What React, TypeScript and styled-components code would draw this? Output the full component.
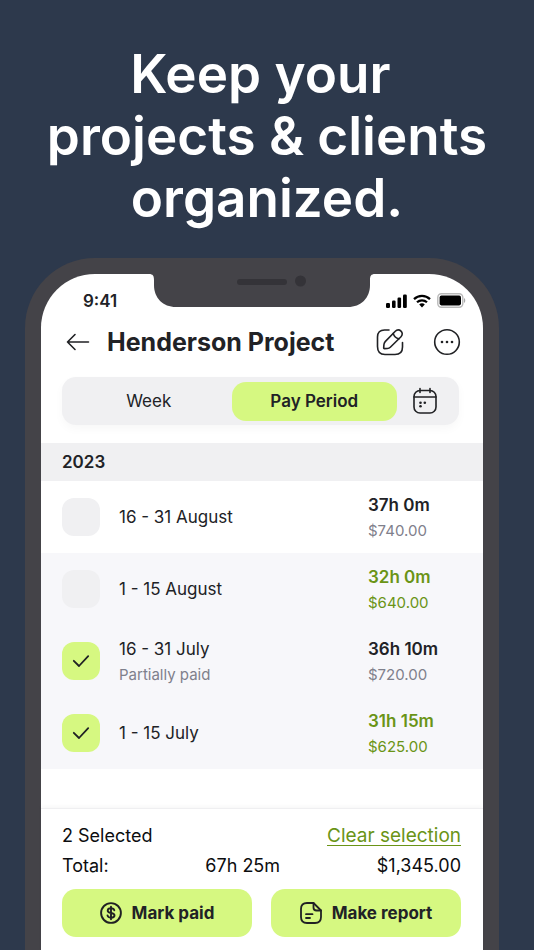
import React, { useState } from "react";
import styled, { createGlobalStyle } from "styled-components";

const color = {
  navy: "#2d394c",
  bezel: "#444348",
  ink: "#212226",
  grey: "#7f808c",
  lime: "#d6f881",
  green: "#6a9416",
  fill: "#f0f0f2",
  shade: "#f7f7fa",
};

const GlobalStyle = createGlobalStyle`
  *, *::before, *::after { box-sizing: border-box; }
  body {
    margin: 0;
    background: ${color.navy};
    color: ${color.ink};
    font-family: Inter, "Liberation Sans", sans-serif;
  }
  button, input { font: inherit; color: inherit; }
  button { border: 0; padding: 0; background: none; cursor: pointer; }
  svg { display: block; }
`;

const Page = styled.main`
  min-height: 100vh;
  display: flex;
  flex-direction: column;
  background: ${color.navy};
`;

const Headline = styled.h1`
  margin: 0;
  padding: 43px 20px 29px;
  color: #fff;
  font-size: 53px;
  font-weight: 600;
  line-height: 62px;
  text-align: center;
`;

const Phone = styled.section`
  flex: 1;
  display: flex;
  margin: 0 35px 0 25px;
  padding: 16px 16px 0;
  border-radius: 70px 70px 0 0;
  background: ${color.bezel};
`;

const Screen = styled.div`
  position: relative;
  flex: 1;
  min-width: 0;
  display: flex;
  flex-direction: column;
  border-radius: 54px 54px 0 0;
  background: #fff;
`;

const Notch = styled.svg`
  position: absolute;
  top: -1px;
  left: 50%;
  margin-left: -113px;
`;

const StatusBar = styled.div`
  display: flex;
  align-items: center;
  justify-content: space-between;
  height: 44px;
  padding: 9px 17px 0 42px;
`;

const Clock = styled.span`
  font-size: 17px;
  font-weight: 600;
`;

const StatusIcons = styled.div`
  display: flex;
  align-items: center;
  gap: 6px;
`;

const TitleBar = styled.header`
  display: flex;
  align-items: center;
  height: 48px;
  padding: 0 22px 0 23px;
`;

const Title = styled.h2`
  flex: 1;
  margin: 0 0 0 15px;
  font-size: 25px;
  font-weight: 700;
  line-height: 32px;
  white-space: nowrap;
`;

const IconButton = styled.button`
  display: grid;
  place-items: center;
  width: 28px;
  height: 28px;
  & + & { margin-left: 29px; }
`;

const Segments = styled.div`
  display: flex;
  align-items: center;
  height: 48px;
  margin: 11px 24px 18px 21px;
  padding: 4px 20px 4px 4px;
  border-radius: 14px;
  background: ${color.fill};
  box-shadow: 0 4px 10px rgba(0, 0, 0, 0.03);
`;

const Segment = styled.button<{ $active: boolean }>`
  flex: 1;
  height: 39px;
  border-radius: 14px;
  background: ${(p) => (p.$active ? color.lime : "transparent")};
  font-size: 17px;
  font-weight: ${(p) => (p.$active ? 600 : 400)};
`;

const CalendarButton = styled(IconButton)`
  margin-left: 14px;
`;

const YearHeading = styled.h3`
  margin: 0;
  padding: 0 21px;
  background: ${color.fill};
  font-size: 17px;
  font-weight: 600;
  line-height: 38px;
`;

const List = styled.ul`
  margin: 0 0 39px;
  padding: 0;
  list-style: none;
`;

const Row = styled.li<{ $shaded: boolean }>`
  background: ${(p) => (p.$shaded ? color.shade : "#fff")};
`;

const RowLabel = styled.label`
  display: grid;
  grid-template-columns: 38px 1fr 93px;
  column-gap: 19px;
  align-items: center;
  height: 72px;
  padding: 0 22px 0 21px;
  cursor: pointer;
`;

const CheckBox = styled.span`
  display: grid;
  place-items: center;
  & > * { grid-area: 1 / 1; }
  svg { pointer-events: none; }
`;

const CheckInput = styled.input`
  appearance: none;
  width: 38px;
  height: 38px;
  margin: 0;
  border-radius: 12px;
  background: ${color.fill};
  cursor: pointer;
  &:checked { background: ${color.lime}; }
`;

const Lines = styled.span<{ $paid?: boolean }>`
  display: flex;
  flex-direction: column;
  color: ${(p) => (p.$paid ? color.green : color.ink)};
`;

const Period = styled.span`
  font-size: 17px;
  line-height: 26px;
`;

const Hours = styled.span`
  font-size: 17px;
  font-weight: 600;
  line-height: 26px;
`;

const Detail = styled.span<{ $paid?: boolean }>`
  color: ${(p) => (p.$paid ? color.green : color.grey)};
  font-size: 15px;
  line-height: 25px;
`;

const Footer = styled.footer`
  flex: 1;
  padding: 12px 22px 14px 21px;
  border-top: 1px solid #efeff1;
  box-shadow: 0 -2px 4px rgba(0, 0, 0, 0.03);
  color: #0c0d0f;
  font-size: 18px;
  line-height: 30px;
`;

const SummaryLine = styled.div`
  display: flex;
  justify-content: space-between;
`;

const ClearButton = styled.button`
  color: ${color.green};
  font-size: 19px;
  line-height: 30px;
  text-decoration: underline;
  text-decoration-thickness: 1px;
  text-underline-offset: 3px;
`;

const Actions = styled.div`
  display: grid;
  grid-template-columns: 1fr 1fr;
  gap: 19px;
  margin-top: 8px;
`;

const ActionButton = styled.button`
  display: flex;
  align-items: center;
  justify-content: center;
  gap: 10px;
  height: 48px;
  border-radius: 14px;
  background: ${color.lime};
  color: ${color.ink};
  font-size: 17px;
  font-weight: 700;
`;

const stroke = {
  fill: "none",
  stroke: "#202124",
  strokeWidth: 1.6,
  strokeLinecap: "round" as const,
  strokeLinejoin: "round" as const,
};

const NotchShape = () => (
  <Notch width="226" height="34" viewBox="0 0 226 34" aria-hidden="true">
    <path
      d="M0 0H226V1C222 1 221 3 221 7V12C221 25 212 34 199 34H27C14 34 5 25 5 12V7C5 3 4 1 0 1Z"
      fill={color.bezel}
    />
    <rect x="88" y="6" width="50" height="6" rx="3" fill="#343338" />
    <circle cx="151.500" cy="8" r="5.500" fill="#343338" />
  </Notch>
);

const SignalIcon = () => (
  <svg width="21" height="14" viewBox="0 0 21 14" aria-hidden="true">
    <rect x="0" y="9" width="4" height="5" rx="1.2" />
    <rect x="6" y="6.5" width="3.6" height="7.5" rx="1.2" />
    <rect x="11.5" y="3.5" width="3.6" height="10.5" rx="1.2" />
    <rect x="17" y="0.5" width="3.8" height="13.5" rx="1.2" />
  </svg>
);

const WifiIcon = () => (
  <svg width="18" height="14" viewBox="0 0 18 14" fill="none" stroke="#000" strokeWidth="2.2" aria-hidden="true">
    <path d="M1 5.1C5.5.7 12.5.7 17 5.1" />
    <path d="M4 8.3c2.8-2.7 7.2-2.7 10 0" />
    <path d="M6.2 10.4c1.6-1.4 4-1.4 5.6 0L9 13.4Z" fill="#000" stroke="none" />
  </svg>
);

const BatteryIcon = () => (
  <svg width="29" height="15" viewBox="0 0 29 15" aria-hidden="true">
    <rect x="0.8" y="0.8" width="25" height="13.4" rx="3.6" fill="#fff" stroke="#b9b9b9" strokeWidth="1.4" />
    <rect x="2.6" y="2.6" width="21.4" height="9.8" rx="1.8" />
    <path d="M27 5v5c1.7-.8 1.7-4.2 0-5Z" fill="#a9a9a9" />
  </svg>
);

const BackIcon = () => (
  <svg width="24" height="20" viewBox="0 0 24 20" {...stroke} aria-hidden="true">
    <path d="M22.5 10H1.5M9 2.5 1.5 10 9 17.5" />
  </svg>
);

const EditIcon = () => (
  <svg width="28" height="28" viewBox="0 0 28 28" {...stroke} aria-hidden="true">
    <path d="M13 2H8.5C4 2 1.5 4.500 1.500 9V18.500C1.500 24 4 26.500 9 26.500H19C24 26.500 26.500 24 26.500 19V14.500" />
    <path d="M19.300 3.200C21 1.400 23.400 1.500 25 3.100C26.600 4.700 26.700 7 25 8.700L14.300 19.200C13.500 20 12.500 20.400 11.400 20.500L8.500 20.600C7.900 20.600 7.600 20.300 7.700 19.700L7.900 16.700C8 15.600 8.400 14.500 9.200 13.600Z" />
    <path d="M17.200 5.400C18 8.200 20 10.200 22.900 10.900" />
  </svg>
);

const MoreIcon = () => (
  <svg width="28" height="28" viewBox="0 0 28 28" {...stroke} aria-hidden="true">
    <circle cx="14" cy="14" r="12.300" />
    <g fill="#202124" stroke="none">
      <circle cx="9" cy="14" r="1.300" />
      <circle cx="14" cy="14" r="1.300" />
      <circle cx="19" cy="14" r="1.300" />
    </g>
  </svg>
);

const CalendarIcon = () => (
  <svg width="26" height="28" viewBox="0 0 26 28" {...stroke} aria-hidden="true">
    <rect x="2" y="3.500" width="22" height="22.500" rx="6" />
    <path d="M2 10H24M8 1.500V5.500M18 1.500V5.500" />
    <g fill="#202124" stroke="none">
      <circle cx="8.500" cy="15.800" r="1.300" />
      <circle cx="12.800" cy="15.800" r="1.300" />
      <circle cx="8.500" cy="19.200" r="1.300" />
    </g>
  </svg>
);

const CheckIcon = () => (
  <svg width="18" height="14" viewBox="0 0 18 14" {...stroke} strokeWidth="1.800" aria-hidden="true">
    <path d="M1.800 6.800 7 12 16.200 2.200" />
  </svg>
);

const DollarIcon = () => (
  <svg width="22" height="22" viewBox="0 0 22 22" {...stroke} strokeWidth="1.900" aria-hidden="true">
    <circle cx="11" cy="11" r="9.900" />
    <path d="M14.300 8.300C13.900 7 12.700 6.300 11 6.300C9 6.300 7.700 7.200 7.700 8.700C7.700 12 14.500 9.900 14.500 13.300C14.500 14.800 13.100 15.700 11.100 15.700C9.200 15.700 7.800 14.900 7.500 13.400M11 4.800V17.200" />
  </svg>
);

const ReportIcon = () => (
  <svg width="22" height="22" viewBox="0 0 22 22" {...stroke} strokeWidth="1.800" aria-hidden="true">
    <path d="M13.500 1H7C3 1 1 3 1 7V15C1 19 3 21 7 21H15C19 21 21 19 21 15V8.500Z" />
    <path d="M13.500 1V5.500C13.500 7.800 14.500 8.500 16.500 8.500H21M6 12.200H12.500M6 16H10" />
  </svg>
);

interface Entry {
  period: string;
  note?: string;
  hours: string;
  amount: string;
  paid?: boolean;
  selected: boolean;
}

const entries: Entry[] = [
  { period: "16 - 31 August", hours: "37h 0m", amount: "$740.00", selected: false },
  { period: "1 - 15 August", hours: "32h 0m", amount: "$640.00", paid: true, selected: false },
  { period: "16 - 31 July", note: "Partially paid", hours: "36h 10m", amount: "$720.00", selected: true },
  { period: "1 - 15 July", hours: "31h 15m", amount: "$625.00", paid: true, selected: true },
];

export default function App() {
  const [checked, setChecked] = useState(entries.map((e) => e.selected));
  const [view, setView] = useState("Pay Period");

  return (
    <Page>
      <GlobalStyle />
      <Headline>
        Keep your&nbsp;
        <br />
        projects &amp; clients
        <br />
        organized.
      </Headline>
      <Phone>
        <Screen>
          <NotchShape />
          <StatusBar>
            <Clock>9:41</Clock>
            <StatusIcons>
              <SignalIcon />
              <WifiIcon />
              <BatteryIcon />
            </StatusIcons>
          </StatusBar>
          <TitleBar>
            <IconButton aria-label="Back">
              <BackIcon />
            </IconButton>
            <Title>Henderson Project</Title>
            <IconButton aria-label="Edit project">
              <EditIcon />
            </IconButton>
            <IconButton aria-label="More options">
              <MoreIcon />
            </IconButton>
          </TitleBar>
          <Segments>
            {["Week", "Pay Period"].map((name) => (
              <Segment key={name} $active={view === name} aria-pressed={view === name} onClick={() => setView(name)}>
                {name}
              </Segment>
            ))}
            <CalendarButton aria-label="Choose dates">
              <CalendarIcon />
            </CalendarButton>
          </Segments>
          <YearHeading>2023</YearHeading>
          <List>
            {entries.map((entry, i) => (
              <Row key={entry.period} $shaded={i > 0}>
                <RowLabel>
                  <CheckBox>
                    <CheckInput
                      type="checkbox"
                      checked={checked[i]}
                      onChange={() => setChecked(checked.map((c, j) => (j === i ? !c : c)))}
                    />
                    {checked[i] && <CheckIcon />}
                  </CheckBox>
                  <Lines>
                    <Period>{entry.period}</Period>
                    {entry.note && <Detail>{entry.note}</Detail>}
                  </Lines>
                  <Lines $paid={entry.paid}>
                    <Hours>{entry.hours}</Hours>
                    <Detail $paid={entry.paid}>{entry.amount}</Detail>
                  </Lines>
                </RowLabel>
              </Row>
            ))}
          </List>
          <Footer>
            <SummaryLine>
              <span>{checked.filter(Boolean).length} Selected</span>
              <ClearButton onClick={() => setChecked(entries.map(() => false))}>Clear selection</ClearButton>
            </SummaryLine>
            <SummaryLine>
              <span>Total:</span>
              <span>67h 25m</span>
              <span>$1,345.00</span>
            </SummaryLine>
            <Actions>
              <ActionButton>
                <DollarIcon />
                Mark paid
              </ActionButton>
              <ActionButton>
                <ReportIcon />
                Make report
              </ActionButton>
            </Actions>
          </Footer>
        </Screen>
      </Phone>
    </Page>
  );
}
